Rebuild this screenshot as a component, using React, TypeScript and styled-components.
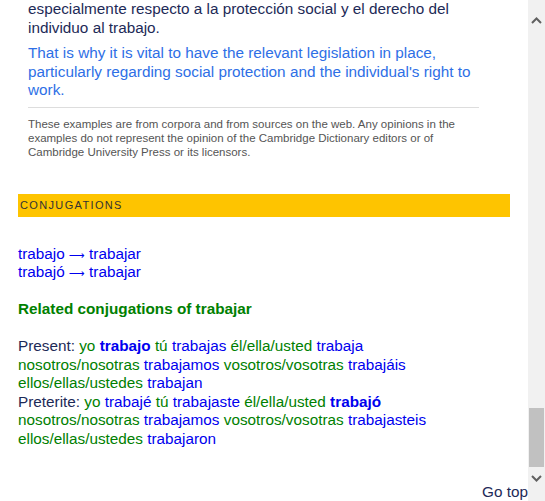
import React from "react";
import styled, { createGlobalStyle } from "styled-components";

const GlobalStyle = createGlobalStyle`
  html, body {
    margin: 0;
    padding: 0;
    background: #fff;
  }
  body {
    font-family: "Liberation Sans", Arial, sans-serif;
    overflow: hidden;
  }
`;

const Colors = {
  TEXT: "#1d2a57",
  EXAMPLE_BLUE: "#2e6fe6",
  GREY: "#555",
  RULE: "#ddd",
  YELLOW: "#fec400",
  LINK: "#0000ee",
  GREEN: "#008000",
  TRACK: "#f1f1f1",
  THUMB: "#c1c1c1",
  ARROW: "#606060",
};

const BODY_SIZE = "15.3px";

const Page = styled.div`
  display: flex;
  flex-direction: row;
  height: 501px;
  width: 545px;
  overflow: hidden;
`;

const Main = styled.div`
  flex: 1;
  display: flex;
  flex-direction: column;
  padding: 0 0 0 18px;
  overflow: hidden;
`;

const Examples = styled.div`
  padding: 0 31px 0 10px;
  margin-right: 18px;
`;

const ExampleText = styled.p<{ $blue?: boolean }>`
  margin: 0 0 7px;
  font-size: ${BODY_SIZE};
  line-height: 18.5px;
  color: ${(p) => (p.$blue ? Colors.EXAMPLE_BLUE : Colors.TEXT)};
`;

const Rule = styled.hr`
  border: 0;
  border-top: 1px solid ${Colors.RULE};
  margin: 4px 0 9px;
`;

const Disclaimer = styled.p`
  margin: 0;
  font-size: 11.5px;
  line-height: 14px;
  color: ${Colors.GREY};
`;

const SectionBar = styled.div`
  margin: 35px 18px 0 0;
  height: 23px;
  background: ${Colors.YELLOW};
  display: flex;
  align-items: center;
  padding-left: 2px;
  font-size: 11px;
  letter-spacing: 1.35px;
  color: #333;
`;

const LinkList = styled.div`
  margin-top: 28px;
  display: flex;
  flex-direction: column;
`;

const Link = styled.a`
  font-size: ${BODY_SIZE};
  line-height: 18.5px;
  color: ${Colors.LINK};
  text-decoration: none;
`;

const Arrow = styled.span`
  font-family: "DejaVu Sans", sans-serif;
  font-size: 11px;
  line-height: 0;
`;

const Heading = styled.h3`
  margin: 18px 0 0;
  font-size: ${BODY_SIZE};
  line-height: 18.5px;
  font-weight: bold;
  color: ${Colors.GREEN};
`;

const Conjugations = styled.div`
  margin: 19px 18px 0 0;
  font-size: ${BODY_SIZE};
  line-height: 18.5px;
  color: ${Colors.TEXT};
`;

const Pronoun = styled.span`
  color: ${Colors.GREEN};
`;

const Verb = styled.span<{ $bold?: boolean }>`
  color: ${Colors.LINK};
  font-weight: ${(p) => (p.$bold ? "bold" : "normal")};
`;

const GoTop = styled.div`
  margin-top: auto;
  align-self: flex-end;
  font-size: ${BODY_SIZE};
  line-height: 18.5px;
  color: ${Colors.TEXT};
`;

const Scrollbar = styled.div`
  width: 17px;
  background: ${Colors.TRACK};
  display: flex;
  flex-direction: column;
  align-items: center;
  padding: 12px 0 14px;
`;

const ArrowBox = styled.div`
  height: 17px;
  width: 17px;
  display: flex;
  align-items: center;
  justify-content: center;
`;

const Track = styled.div`
  flex: 1;
  width: 100%;
  display: flex;
  flex-direction: column;
  justify-content: flex-end;
  padding-bottom: 3px;
`;

const Thumb = styled.div`
  height: 59px;
  margin: 0 1px;
  background: ${Colors.THUMB};
`;

function Chevron(props: { up?: boolean }) {
  return (
    <svg width="11" height="7" viewBox="0 0 11 7">
      <path
        d={props.up ? "M1 6 L5.5 1.5 L10 6" : "M1 1 L5.5 5.5 L10 1"}
        fill="none"
        stroke={Colors.ARROW}
        strokeWidth="2"
      />
    </svg>
  );
}

type Form = { pronoun: string; verb: string; bold?: boolean };

const present: Form[] = [
  { pronoun: "yo", verb: "trabajo", bold: true },
  { pronoun: "tú", verb: "trabajas" },
  { pronoun: "él/ella/usted", verb: "trabaja" },
  { pronoun: "nosotros/nosotras", verb: "trabajamos" },
  { pronoun: "vosotros/vosotras", verb: "trabajáis" },
  { pronoun: "ellos/ellas/ustedes", verb: "trabajan" },
];

const preterite: Form[] = [
  { pronoun: "yo", verb: "trabajé" },
  { pronoun: "tú", verb: "trabajaste" },
  { pronoun: "él/ella/usted", verb: "trabajó", bold: true },
  { pronoun: "nosotros/nosotras", verb: "trabajamos" },
  { pronoun: "vosotros/vosotras", verb: "trabajasteis" },
  { pronoun: "ellos/ellas/ustedes", verb: "trabajaron" },
];

// line breaks fall before the 4th and 6th pronoun, as on the page
function Tense(props: { label: string; forms: Form[] }) {
  return (
    <div>
      {props.label}:{" "}
      {props.forms.map((f, i) => (
        <React.Fragment key={i}>
          {i === 3 || i === 5 ? <br /> : null}
          <Pronoun>{f.pronoun}</Pronoun> <Verb $bold={f.bold}>{f.verb}</Verb>
          {i === 2 || i === 4 || i === 5 ? null : " "}
        </React.Fragment>
      ))}
    </div>
  );
}

export default function App() {
  return (
    <Page>
      <GlobalStyle />
      <Main>
        <Examples>
          <ExampleText>
            especialmente respecto a la protección social y el derecho del
            individuo al trabajo.
          </ExampleText>
          <ExampleText $blue>
            That is why it is vital to have the relevant legislation in place,
            particularly regarding social protection and the individual's right
            to work.
          </ExampleText>
          <Rule />
          <Disclaimer>
            These examples are from corpora and from sources on the web. Any
            opinions in the examples do not represent the opinion of the
            Cambridge Dictionary editors or of Cambridge University Press or its
            licensors.
          </Disclaimer>
        </Examples>
        <SectionBar>CONJUGATIONS</SectionBar>
        <LinkList>
          <Link>
            trabajo <Arrow>⟶</Arrow> trabajar
          </Link>
          <Link>
            trabajó <Arrow>⟶</Arrow> trabajar
          </Link>
        </LinkList>
        <Heading>Related conjugations of trabajar</Heading>
        <Conjugations>
          <Tense label="Present" forms={present} />
          <Tense label="Preterite" forms={preterite} />
        </Conjugations>
        <GoTop>Go top</GoTop>
      </Main>
      <Scrollbar>
        <ArrowBox>
          <Chevron up />
        </ArrowBox>
        <Track>
          <Thumb />
        </Track>
        <ArrowBox>
          <Chevron />
        </ArrowBox>
      </Scrollbar>
    </Page>
  );
}
